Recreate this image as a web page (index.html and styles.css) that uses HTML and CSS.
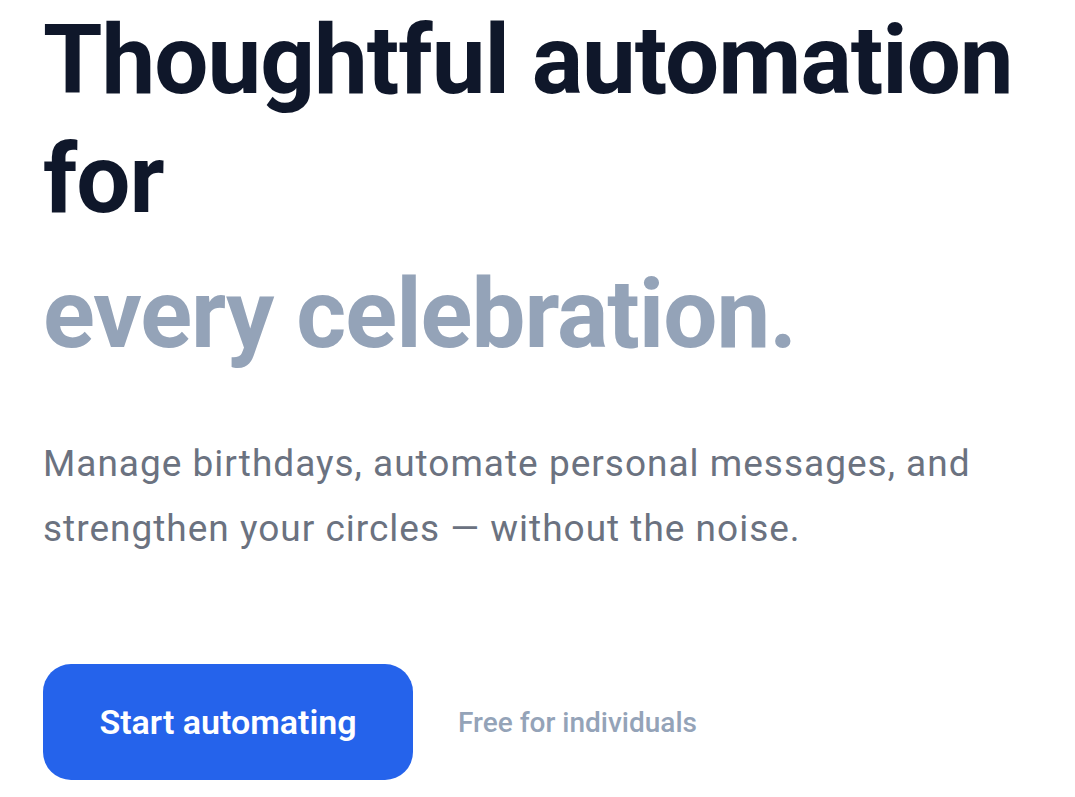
FILE: index.html
```html
<!DOCTYPE html>
<html lang="en">
<head>
<meta charset="utf-8">
<link rel="stylesheet" href="styles.css">
</head>
<body>
<main class="hero">
  <h1 class="title">Thoughtful automation for <span class="accent">every celebration.</span></h1>
  <p class="lead">Manage birthdays, automate personal messages, and strengthen your circles — without the noise.</p>
  <div class="actions">
    <a class="btn" href="#">Start automating</a>
    <span class="note">Free for individuals</span>
  </div>
</main>
</body>
</html>
```
FILE: styles.css
```css
html, body {
  margin: 0;
  padding: 0;
  background: #ffffff;
}
body {
  font-family: Roboto, "Noto Sans", Arial, sans-serif;
}
.hero {
  padding: 1px 43px 0 43px;
}
.title {
  margin: 0;
  font-size: 96px;
  font-weight: 700;
  line-height: 119px;
  color: #0f172a;
  letter-spacing: -1px;
}
.accent {
  display: block;
  margin-top: 16px;
  color: #94a3b8;
}
.lead {
  margin: 57px 0 0 0;
  font-size: 37px;
  line-height: 65px;
  letter-spacing: 1px;
  color: #6b7280;
}
.actions {
  margin-top: 103px;
  display: flex;
  align-items: center;
  gap: 45px;
}
.btn {
  display: inline-flex;
  align-items: center;
  justify-content: center;
  width: 370px;
  height: 116px;
  border-radius: 28px;
  background: #2563eb;
  color: #ffffff;
  font-size: 34px;
  font-weight: 600;
  text-decoration: none;
}
.note {
  font-size: 28px;
  font-weight: 500;
  color: #94a3b8;
}
```
